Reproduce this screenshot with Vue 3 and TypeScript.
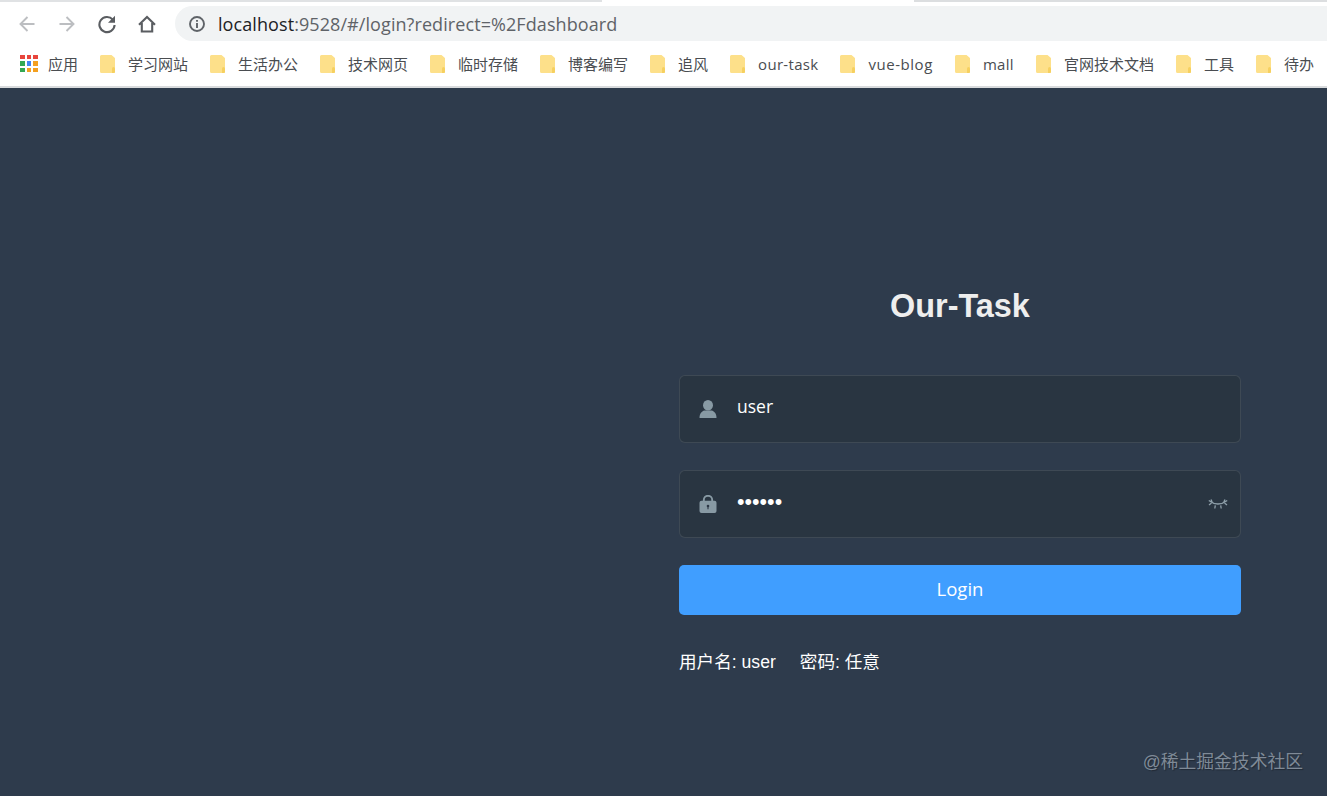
<script setup lang="ts">
const bookmarks: { name: string; cls?: string }[] = [
  { name: '学习网站' },
  { name: '生活办公' },
  { name: '技术网页' },
  { name: '临时存储' },
  { name: '博客编写' },
  { name: '追风' },
  { name: 'our-task', cls: 'latin' },
  { name: 'vue-blog', cls: 'latin-wide' },
  { name: 'mall', cls: 'latin' },
  { name: '官网技术文档' },
  { name: '工具' },
  { name: '待办' },
]
const apps = ['#e8453c', '#e8453c', '#e8453c', '#34a853', '#4285f4', '#f4a020', '#34a853', '#f4a020', '#f4a020']
</script>

<template>
  <div class="page">
    <header class="chrome">
      <div class="tabstrip"><i class="strip-a"></i><i class="strip-b"></i><i class="strip-c"></i></div>
      <div class="toolbar">
        <svg class="nav" viewBox="0 0 20 20" width="20" height="20"><path d="M17.500 10H4M10.500 3L3.500 10l7 7" fill="none" stroke="#bcbec1" stroke-width="1.900"/></svg>
        <svg class="nav" viewBox="0 0 20 20" width="20" height="20"><path d="M2.500 10H16M9.500 3l7 7-7 7" fill="none" stroke="#bcbec1" stroke-width="1.900"/></svg>
        <svg class="nav" viewBox="0 0 20 20" width="20" height="20"><path d="M15.800 5.600A7.600 7.600 0 1 0 17.600 11" fill="none" stroke="#5a5d61" stroke-width="2.100"/><path d="M18 1.800V8.800H11Z" fill="#5a5d61"/></svg>
        <svg class="nav" viewBox="0 0 20 20" width="20" height="20"><path d="M2 10.800L10 3l8 7.800M4.800 9v8.500h10.400V9" fill="none" stroke="#5a5d61" stroke-width="2.100"/></svg>
        <div class="omnibox">
          <svg viewBox="0 0 18 18" width="18" height="18"><circle cx="9" cy="9" r="7" fill="none" stroke="#5f6368" stroke-width="1.900"/><path d="M9 8v5M9 5v1.800" stroke="#5f6368" stroke-width="1.900"/></svg>
          <span class="url"><b>localhost</b>:9528/#/login?redirect=%2Fdashboard</span>
        </div>
      </div>
      <nav class="bookmarks">
        <div class="bm apps">
          <span class="grid"><i v-for="(c, i) in apps" :key="i" :style="{ background: c }"></i></span>
          <span>应用</span>
        </div>
        <div v-for="b in bookmarks" :key="b.name" class="bm">
          <svg class="folder" viewBox="0 0 15 18" width="15" height="18"><path d="M1.500 0h10L15 3v13.500a1.500 1.500 0 0 1-1.500 1.500h-12A1.500 1.500 0 0 1 0 16.500v-15A1.500 1.500 0 0 1 1.500 0Z" fill="#fde08a"/><path d="M12 13.500a1.500 1.500 0 0 1 3 0V17a1 1 0 0 1-1 1h-2Z" fill="#f6d060"/></svg>
          <span :class="b.cls">{{ b.name }}</span>
        </div>
      </nav>
    </header>

    <main class="login">
      <form class="form" @submit.prevent>
        <h3 class="title">Our-Task</h3>
        <div class="field">
          <svg class="ico" viewBox="0 0 18 18" width="18" height="18"><ellipse cx="9" cy="5.200" rx="5" ry="5.200" fill="#889aa4"/><path d="M.5 18c0-4 1.800-6.800 5-7.500h7c3.200.7 5 3.500 5 7.500Z" fill="#889aa4"/></svg>
          <span class="value">user</span>
        </div>
        <div class="field">
          <svg class="ico" viewBox="0 0 18 18" width="18" height="18"><path d="M4.800 7V5a4.200 4.200 0 0 1 8.400 0v2" fill="none" stroke="#889aa4" stroke-width="1.900"/><rect x=".5" y="5.800" width="17" height="12.200" rx="2" fill="#889aa4"/><circle cx="9" cy="11" r="1.300" fill="#2c3845"/><path d="M9 11.500v2.800" stroke="#2c3845" stroke-width="1.100"/></svg>
          <span class="value dots">••••••</span>
          <svg class="eye" viewBox="0 0 20 10" width="20" height="10"><path d="M.8 1.500Q10 8.500 19.200 1.500M3.500 4L1 6M16.500 4L19 6M7.300 6.300L6.800 9.500M12.700 6.300l.5 3.200M3 .5l1.200 2.500M17 .5l-1.200 2.500" fill="none" stroke="#8fa0aa" stroke-width="1.300"/></svg>
        </div>
        <button class="submit" type="button">Login</button>
        <div class="tips"><span>用户名: user</span><span>密码: 任意</span></div>
      </form>
    </main>
    <div class="watermark">@稀土掘金技术社区</div>
  </div>
</template>

<style>
html, body { margin: 0; height: 100%; overflow: hidden; }
</style>

<style scoped>
.page {
  position: relative;
  width: 1327px;
  height: 796px;
  display: flex;
  flex-direction: column;
  overflow: hidden;
  font-family: "Liberation Sans", "Noto Sans CJK SC", sans-serif;
  background: #2e3b4c;
}
.chrome {
  height: 88px;
  flex: none;
  display: flex;
  flex-direction: column;
  background: #fff;
  border-bottom: 2px solid #d9dbdd;
  box-sizing: border-box;
}
.tabstrip { height: 2px; display: flex; flex: none; }
.tabstrip i { display: block; height: 100%; }
.strip-a { width: 602px; background: #e0e2e4; }
.strip-b { width: 312px; background: #fff; }
.strip-c { flex: 1; background: #dcdee0; }
.toolbar {
  height: 35px;
  margin-top: 4px;
  flex: none;
  display: flex;
  align-items: center;
  padding-left: 17px;
}
.nav { margin-right: 20px; flex: none; }
.nav:nth-child(4) { margin-right: 18px; }
.omnibox {
  flex: 1;
  height: 35px;
  margin-right: -20px;
  border-radius: 18px;
  background: #f1f3f4;
  display: flex;
  align-items: center;
  padding-left: 13px;
  gap: 12px;
}
.url {
  font-family: "Open Sans", "Noto Sans", sans-serif;
  font-size: 18px;
  letter-spacing: 0.08px;
  color: #5f6368;
  white-space: nowrap;
}
.url b { font-weight: 400; color: #202124; }
.bookmarks {
  flex: 1;
  display: flex;
  align-items: center;
  padding-left: 20px;
  gap: 22px;
  white-space: nowrap;
  font-family: "Open Sans", "Noto Sans CJK SC", sans-serif;
  font-size: 15px;
  color: #4a4d51;
}
.bm { display: flex; align-items: center; gap: 13px; flex: none; }
.bm.apps { gap: 10.500px; }
.latin { letter-spacing: 0.3px; }
.latin-wide { letter-spacing: 0.55px; }
.folder { flex: none; }
.grid {
  display: grid;
  grid-template-columns: repeat(3, 4.500px);
  grid-auto-rows: 4.500px;
  gap: 2px;
}
.grid i { display: block; }
.login {
  flex: 1;
  display: flex;
  justify-content: flex-end;
  padding-right: 86px;
  padding-top: 198px;
}
.form { width: 562px; display: flex; flex-direction: column; }
.title {
  margin: 0 0 49px;
  height: 40px;
  line-height: 40px;
  text-align: center;
  font-size: 32.400px;
  font-weight: 700;
  color: #eee;
}
.field {
  height: 68px;
  box-sizing: border-box;
  margin-bottom: 27px;
  display: flex;
  align-items: center;
  padding: 0 12px 0 19px;
  background: #293541;
  border: 1px solid rgba(255, 255, 255, 0.1);
  border-radius: 6px;
}
.ico { flex: none; }
.value {
  margin-left: 20px;
  padding-bottom: 6px;
  font-size: 17.500px;
  color: #fff;
  font-family: "Open Sans", sans-serif;
  flex: 1;
}
.dots { font-family: "Liberation Sans", sans-serif; font-size: 21.500px; padding-bottom: 4px; }
.eye { flex: none; margin-right: 0; }
.submit {
  height: 50px;
  border: 0;
  border-radius: 5px;
  background: #409eff;
  color: #fff;
  font-size: 18.500px;
  font-family: "Open Sans", sans-serif;
  padding: 0 0 4px;
  margin-bottom: 35px;
}
.tips {
  display: flex;
  gap: 24px;
  font-size: 17.600px;
  line-height: 24px;
  color: #fff;
}
.watermark {
  position: absolute;
  right: 24px;
  bottom: 22px;
  font-size: 17.800px;
  line-height: 24px;
  color: #7f8a97;
  text-shadow: 1px 1px 1px rgba(0, 0, 0, 0.3);
}
</style>
